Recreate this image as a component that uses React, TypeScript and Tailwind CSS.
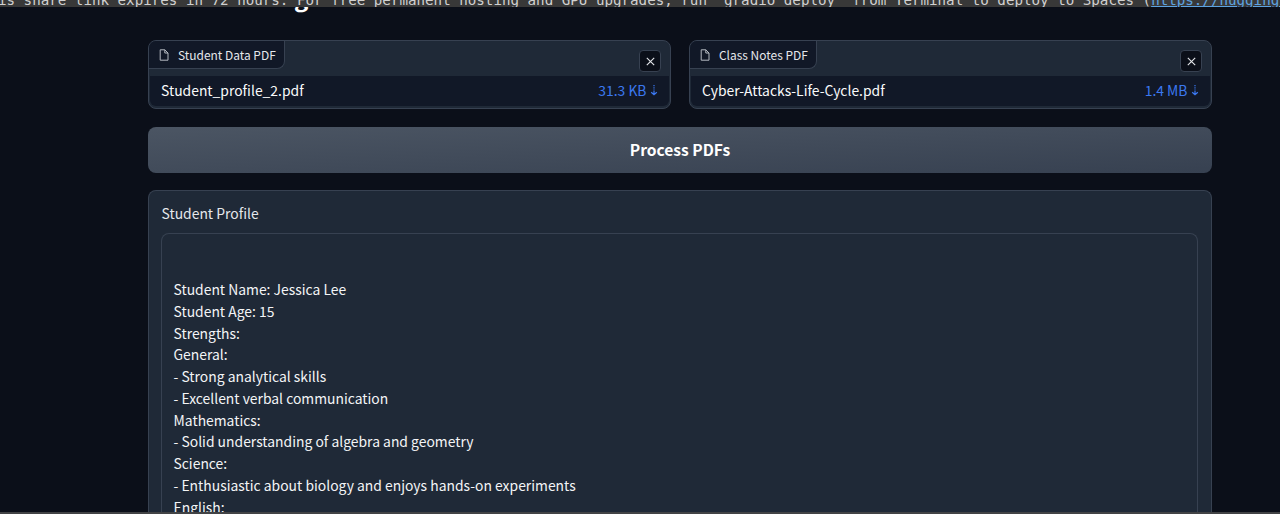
import type { ReactNode } from 'react';

const profileLines = [
  'Student Name: Jessica Lee',
  'Student Age: 15',
  'Strengths:',
  'General:',
  '- Strong analytical skills',
  '- Excellent verbal communication',
  'Mathematics:',
  '- Solid understanding of algebra and geometry',
  'Science:',
  '- Enthusiastic about biology and enjoys hands-on experiments',
  'English:',
];

function FileIcon() {
  return (
    <svg width="10" height="12" viewBox="0 0 10 12" fill="none" stroke="#b4b9c1" strokeWidth="1" strokeLinejoin="round">
      <path d="M1.2.8h4.6L9 4v7.2H1.2z" />
      <path d="M5.8.8V4H9" />
    </svg>
  );
}

function FileCard({ label, name, size }: { label: string; name: string; size: ReactNode }) {
  return (
    <section className="flex h-[69px] flex-1 flex-col overflow-hidden rounded-lg border border-[#374151] bg-[#1f2937] px-px pb-0.5">
      <div className="flex h-[35px] items-start justify-between">
        <div className="-ml-px flex h-7 items-center gap-[9px] rounded-br-lg border-r border-b border-[#374151] bg-[#111827] pr-[8.5px] pl-[10px] text-[11.95px] text-[#e5e7eb]">
          <FileIcon />
          <span className="whitespace-nowrap">{label}</span>
        </div>
        <button className="mt-[9px] mr-2 flex size-[22px] items-center justify-center rounded border border-[#374151] bg-[#0b0f19]">
          <svg width="9" height="9" viewBox="0 0 9 9" stroke="#e5e7eb" strokeWidth="1.1">
            <path d="M.8.8l7.4 7.4M8.2.8L.8 8.2" />
          </svg>
        </button>
      </div>
      <div className="flex flex-1 items-center justify-between rounded-b-md bg-[#111827] pr-[11.5px] pb-px pl-[11px] text-[13.9px] whitespace-nowrap">
        <span className="text-[#f9fafb]">{name}</span>
        <span className="flex items-center gap-[3px] text-[#3b78f0]">
          {size}
          <svg width="8" height="12" viewBox="0 0 8 12" fill="none" stroke="#3b78f0" strokeWidth="1.2">
            <path d="M4 1v6" strokeDasharray="1.2 1" />
            <path d="M4 7v4M1.2 8.2L4 10.8l2.8-2.6" />
          </svg>
        </span>
      </div>
    </section>
  );
}

export default function App() {
  return (
    <div className="flex h-[514px] w-[1280px] flex-col overflow-hidden bg-[#0b0f19] font-['Noto_Sans_CJK_SC',sans-serif]">
      <div className="flex h-[7px] shrink-0 items-end overflow-hidden bg-[#383838]">
        <p className="-mb-[3px] -ml-[2px] font-['DejaVu_Sans_Mono',monospace] text-[14.2px] leading-5 whitespace-pre text-[#d0d0d0]">
          {'is share link expires in 72 hours. For free permanent hosting and GPU upgrades, run `gradio deploy` from Terminal to deploy to Spaces ('}
          <span className="text-[#5ea3e0] underline">https://huggingface.co/spaces</span>)
        </p>
      </div>
      <div className="flex h-[33px] shrink-0 items-start overflow-hidden pl-[294px]">
        <span className="-mt-[26px] text-[24px] leading-8 font-bold text-white">g</span>
      </div>
      <main className="ml-[148px] flex min-h-0 w-[1064px] flex-1 flex-col gap-[18px] overflow-hidden">
        <div className="flex shrink-0 gap-[18px]">
          <FileCard label="Student Data PDF" name="Student_profile_2.pdf" size="31.3 KB" />
          <FileCard label="Class Notes PDF" name="Cyber-Attacks-Life-Cycle.pdf" size="1.4 MB" />
        </div>
        <button className="-mt-[0.5px] -mb-[0.5px] h-[46px] shrink-0 rounded-lg bg-linear-to-br from-[#4b5563] to-[#374151] pt-px text-[15.6px] font-bold text-white">
          Process PDFs
        </button>
        <section className="flex flex-1 flex-col rounded-t-lg border border-b-0 border-[#374151] bg-[#1f2937] px-3 pt-3">
          <h2 className="pl-[0.5px] text-[13.9px] leading-[21px] text-[#e5e7eb]">Student Profile</h2>
          <div className="mt-[9px] mr-px flex-1 rounded-t-lg border border-b-0 border-[#374151] px-[11.5px] pt-[45px] text-[13.9px] leading-[21.75px] text-[#f3f4f6]">
            {profileLines.map((line) => (
              <p key={line}>{line}</p>
            ))}
          </div>
        </section>
      </main>
      <div className="h-[2px] shrink-0 bg-[#424345]" />
    </div>
  );
}
